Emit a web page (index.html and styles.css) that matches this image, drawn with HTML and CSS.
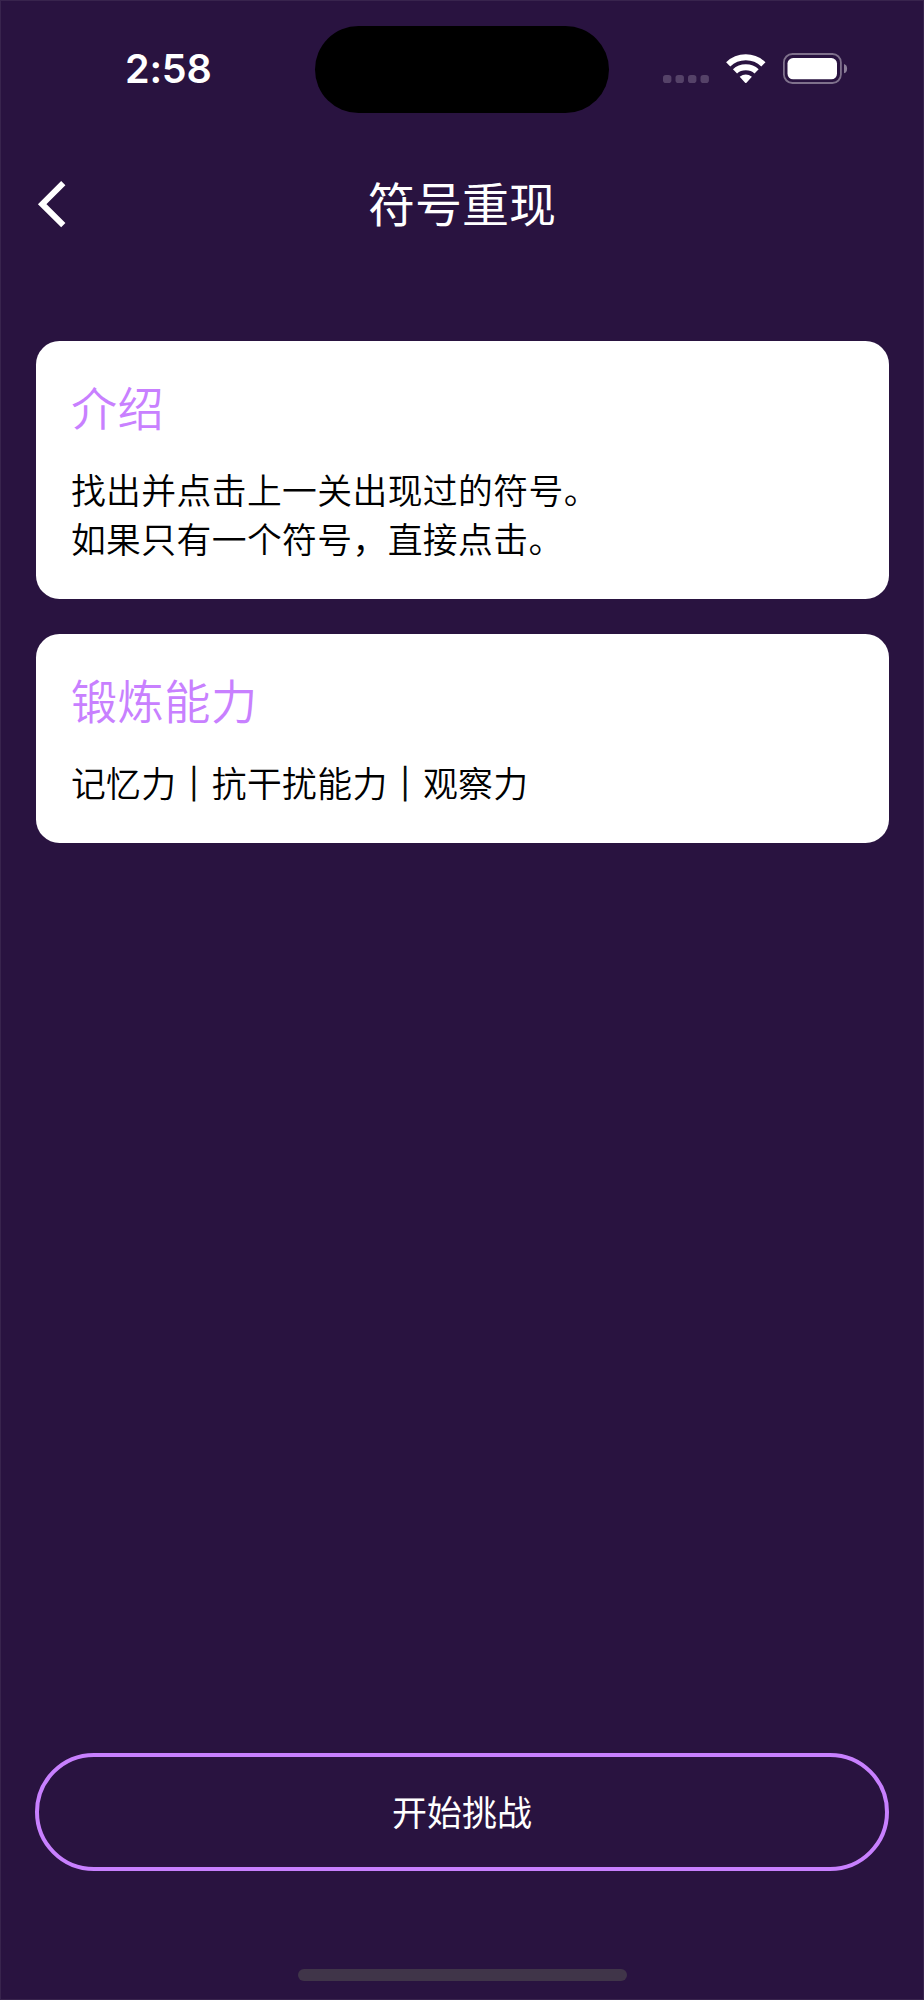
FILE: index.html
```html
<!DOCTYPE html>
<html lang="zh-CN">
<head>
<meta charset="utf-8">
<title>符号重现</title>
<link rel="stylesheet" href="styles.css">
</head>
<body>
<div class="screen">
  <header class="status">
    <div class="time">2:58</div>
    <div class="island"></div>
    <div class="indicators">
      <svg class="dots" width="47" height="8" viewBox="0 0 47 8"><g fill="#554268"><rect x="0" width="8.4" height="8" rx="2.8"/><rect x="12.5" width="8.4" height="8" rx="2.8"/><rect x="25" width="8.4" height="8" rx="2.8"/><rect x="37.5" width="8.4" height="8" rx="2.8"/></g></svg>
      <svg class="wifi" width="40" height="30" viewBox="0 0 40 30"><g fill="none" stroke="#fff" stroke-width="6"><path d="M2.2 10.4Q9.5 3.3 19.8 3.3T37.4 10.4"/><path d="M9 17.3Q13.3 13.2 19.8 13.2T30.6 17.3"/></g><path d="M13.7 22.7Q19.8 18.2 25.9 22.7L20.5 28.7Q19.8 29.5 19.1 28.7Z" fill="#fff"/></svg>
      <svg class="battery" width="65" height="31" viewBox="0 0 65 31"><rect x=".9" y="1" width="57" height="29" rx="8.5" fill="none" stroke="#7f718c" stroke-width="1.8"/><rect x="4.5" y="5" width="49.5" height="21.3" rx="5.6" fill="#fff"/><path d="M61 11Q64.1 11.9 64.1 15.7T61 20.2Z" fill="#8b7e98"/></svg>
    </div>
  </header>
  <nav class="navbar">
    <svg class="back" width="30" height="50" viewBox="0 0 30 50"><path d="M26.3 3.2L5.2 24.2L26.3 45.2" fill="none" stroke="#fff" stroke-width="6"/></svg>
    <h1 class="title">符号重现</h1>
  </nav>
  <main class="content">
    <section class="card">
      <h2 class="card-title">介绍</h2>
      <p class="card-text">找出并点击上一关出现过的符号。<br>如果只有一个符号，直接点击。</p>
    </section>
    <section class="card card-short">
      <h2 class="card-title">锻炼能力</h2>
      <p class="card-text">记忆力<span class="bar">｜</span>抗干扰能力<span class="bar">｜</span>观察力</p>
    </section>
  </main>
  <button class="start">开始挑战</button>
  <div class="home"></div>
</div>
</body>
</html>
```

FILE: styles.css
```css
* { box-sizing: border-box; }
body { margin: 0; }
.screen {
  width: 924px;
  height: 2000px;
  display: flex;
  flex-direction: column;
  background: #291340;
  border: 1px solid #38244d;
  font-family: "Noto Sans CJK SC", sans-serif;
  color: #fff;
}
.status {
  height: 138px;
  padding-top: 25px;
  display: grid;
  grid-template-columns: 314px 294px 1fr;
  align-items: start;
}
.time {
  padding-left: 124px;
  margin-top: 19px;
  font: 600 39.5px/48px Inter, sans-serif;
  letter-spacing: -0.2px;
}
.island { height: 87px; border-radius: 43.5px; background: #000; }
.indicators { display: flex; align-items: flex-start; padding-left: 54px; }
.dots { margin-top: 49px; }
.wifi { margin: 28px 0 0 16px; }
.battery { margin: 27px 0 0 17px; }
.navbar {
  height: 131px;
  padding: 0 36px;
  display: grid;
  grid-template-columns: 30px 1fr 30px;
  align-items: center;
}
.title { margin: 0; padding-bottom: 6px; text-align: center; font-weight: 400; font-size: 47px; line-height: 66px; }
.content { display: flex; flex-direction: column; gap: 35px; padding: 70.5px 34.5px 0; }
.card { height: 258.4px; padding: 32px 35.4px; border-radius: 23.5px; background: #fff; }
.card-short { height: 209.2px; }
.card-title { margin: 0; color: #c880ff; font-weight: 350; font-size: 46.2px; letter-spacing: 0.5px; line-height: 66px; }
.card-text { margin: 26px 0 0; color: #000; font-weight: 350; font-size: 34.8px; letter-spacing: 0.4px; line-height: 49.4px; }
.bar { -webkit-text-stroke: 1px #000; }
.start {
  height: 117.6px;
  margin: auto 34.3px 98px;
  padding: 0 0 2px;
  border: 4px solid #c880ff;
  border-radius: 59px;
  background: transparent;
  color: #fff;
  font: 400 35px/50px "Noto Sans CJK SC", sans-serif;
}
.home { width: 329px; height: 12px; margin: 0 auto 18px; border-radius: 6px; background: #403549; }
```
